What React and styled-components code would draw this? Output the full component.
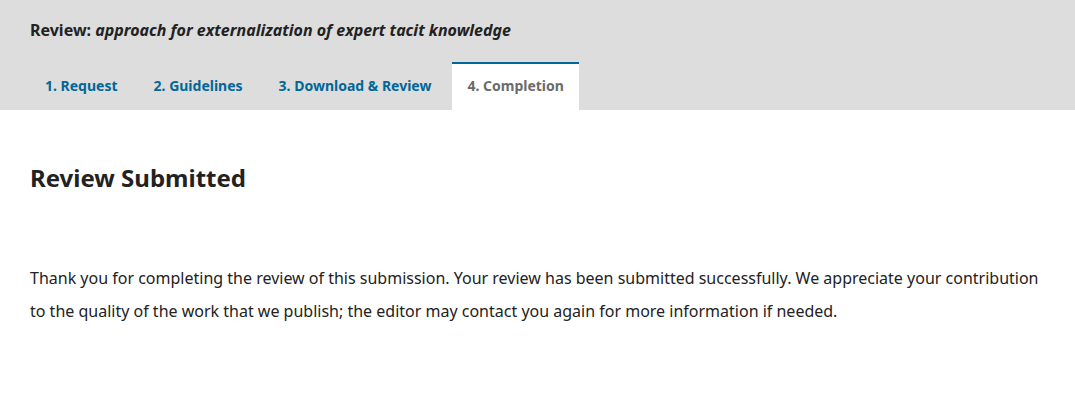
import React from 'react'
import styled, { createGlobalStyle } from 'styled-components'

const GlobalStyle = createGlobalStyle`
  body {
    margin: 0;
    background: #fff;
    font-family: "Noto Sans", "Liberation Sans", sans-serif;
    color: #222;
  }
`

const Header = styled.div`
  background: #ddd;
  padding: 20px 30px 0;
`

const Title = styled.h1`
  margin: 0;
  font-size: 16px;
  line-height: 20px;
  font-weight: bold;
  color: #222;
  em {
    font-style: italic;
  }
`

const Tabs = styled.ul`
  display: flex;
  gap: 6px;
  list-style: none;
  margin: 22px 0 0 0;
  padding: 0;
`

const Tab = styled.li`
  height: 48px;
  box-sizing: border-box;
  display: flex;
  align-items: center;
  padding: 0 15px 4px;
  font-size: 14px;
  font-weight: bold;
  color: ${props => (props.active ? '#6b6b6b' : '#006798')};
  background: ${props => (props.active ? '#fff' : 'transparent')};
  border-top: 2px solid ${props => (props.active ? '#006798' : 'transparent')};
`

const Content = styled.div`
  padding: 52px 30px 0;
`

const Heading = styled.h2`
  margin: 0;
  font-size: 24px;
  line-height: 32px;
  font-weight: bold;
  color: #222;
`

const Text = styled.p`
  margin: 68px 0 0;
  font-size: 16px;
  line-height: 33px;
  color: #222;
`

const tabs = ['1. Request', '2. Guidelines', '3. Download & Review', '4. Completion']

const App = () => (
  <>
    <GlobalStyle />
    <Header>
      <Title>
        Review: <em>approach for externalization of expert tacit knowledge</em>
      </Title>
      <Tabs>
        {tabs.map((t, i) => (
          <Tab key={t} active={i === 3}>{t}</Tab>
        ))}
      </Tabs>
    </Header>
    <Content>
      <Heading>Review Submitted</Heading>
      <Text>
        Thank you for completing the review of this submission. Your review has been submitted successfully. We appreciate your contribution to the quality of the work that we publish; the editor may contact you again for more information if needed.
      </Text>
    </Content>
  </>
)

export default App
